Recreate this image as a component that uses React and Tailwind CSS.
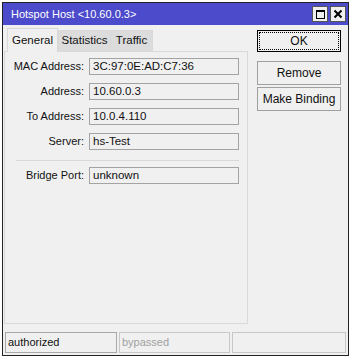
import React from "react";

const font = { fontFamily: '"Liberation Sans", Arial, sans-serif' };

const Field = ({ label, value }) => (
  <div className="flex items-center h-[17px]">
    <span className="w-[84px] shrink-0 text-right pr-[5px] text-[11px] text-[#111]">{label}</span>
    <div className="w-[150px] h-[17px] border border-[#a3a3a3] bg-[#f0f0f0] px-[3px] text-[11.5px] leading-[15px] text-[#111]">
      {value}
    </div>
  </div>
);

const Btn = ({ children, focused }) => (
  <button
    type="button"
    className={
      focused
        ? "w-[84px] h-[22px] border border-black bg-[#f0f0f0] p-[1px] text-[12px] text-[#111]"
        : "w-[84px] h-[24px] border border-[#a0a0a0] bg-[#f0f0f0] text-[12px] text-[#111]"
    }
  >
    {focused ? (
      <div className="h-full w-full border border-dotted border-black flex items-center justify-center">
        {children}
      </div>
    ) : (
      children
    )}
  </button>
);

export default function App() {
  return (
    <div className="w-[351px] h-[357px] bg-white pt-[2px] pl-[2px]" style={font}>
      <div className="w-[347px] h-[354px] border border-[#222] bg-[#f0f0f0] flex flex-col">
        {/* Title bar */}
        <div className="h-[22px] bg-[#4b4bcb] flex items-center justify-between pl-[8px] pr-[2px]">
          <span className="text-[11px] text-white">Hotspot Host &lt;10.60.0.3&gt;</span>
          <div className="flex gap-[2px]">
            <div className="w-[16px] h-[16px] bg-[#f0f0f0] border border-[#555] flex items-center justify-center">
              <div className="w-[9px] h-[9px] border border-black border-t-2" />
            </div>
            <div className="w-[16px] h-[16px] bg-[#f0f0f0] border border-[#555] flex items-center justify-center">
              <svg width="10" height="10" viewBox="0 0 10 10">
                <path d="M1.5 1.5 L8.5 8.5 M8.5 1.5 L1.5 8.5" stroke="black" strokeWidth="2" />
              </svg>
            </div>
          </div>
        </div>

        <div className="flex flex-1 pl-[1px] pr-[5px]">
          {/* Left: tabs + panel */}
          <div className="flex flex-col w-[244px]">
            <div className="flex items-end h-[26px] pl-[3px]">
              <div className="w-[51px] h-[24px] border border-b-0 border-[#d9d9d9] bg-[#f0f0f0] text-[11.5px] text-[#111] flex items-center justify-center -mb-px relative z-10">
                General
              </div>
              <div className="w-[53px] h-[21px] border border-b-0 border-[#d9d9d9] bg-[#dcdcdc] text-[11.5px] text-[#111] flex items-center justify-center">
                Statistics
              </div>
              <div className="w-[42px] h-[21px] border border-b-0 border-l-0 border-[#d9d9d9] bg-[#dcdcdc] text-[11.5px] text-[#111] flex items-center justify-center">
                Traffic
              </div>
            </div>
            <div className="h-[273px] border border-[#d9d9d9] flex flex-col pt-[6px]">
              <Field label="MAC Address:" value="3C:97:0E:AD:C7:36" />
              <div className="h-[8px]" />
              <Field label="Address:" value="10.60.0.3" />
              <div className="h-[8px]" />
              <Field label="To Address:" value="10.0.4.110" />
              <div className="h-[8px]" />
              <Field label="Server:" value="hs-Test" />
              <div className="h-[10px]" />
              <div className="h-px bg-[#d9d9d9] ml-[11px] w-[223px]" />
              <div className="h-[6px]" />
              <Field label="Bridge Port:" value="unknown" />
            </div>
          </div>

          {/* Right: buttons */}
          <div className="flex flex-col pl-[9px] pt-[5px]">
            <Btn focused>OK</Btn>
            <div className="h-[9px]" />
            <Btn>Remove</Btn>
            <div className="h-[2px]" />
            <Btn>Make Binding</Btn>
          </div>
        </div>

        {/* Status bar */}
        <div className="flex gap-[2px] px-[2px] pb-[2px] pt-[5px]">
          <div className="w-[112px] h-[21px] border border-[#a8a8a8] px-[2px] text-[11px] leading-[19px] text-[#111]">authorized</div>
          <div className="w-[111px] h-[21px] border border-[#c8c8c8] px-[2px] text-[11px] leading-[19px] text-[#a0a0a0]">bypassed</div>
          <div className="flex-1 h-[21px] border border-[#c8c8c8]" />
        </div>
      </div>
    </div>
  );
}
